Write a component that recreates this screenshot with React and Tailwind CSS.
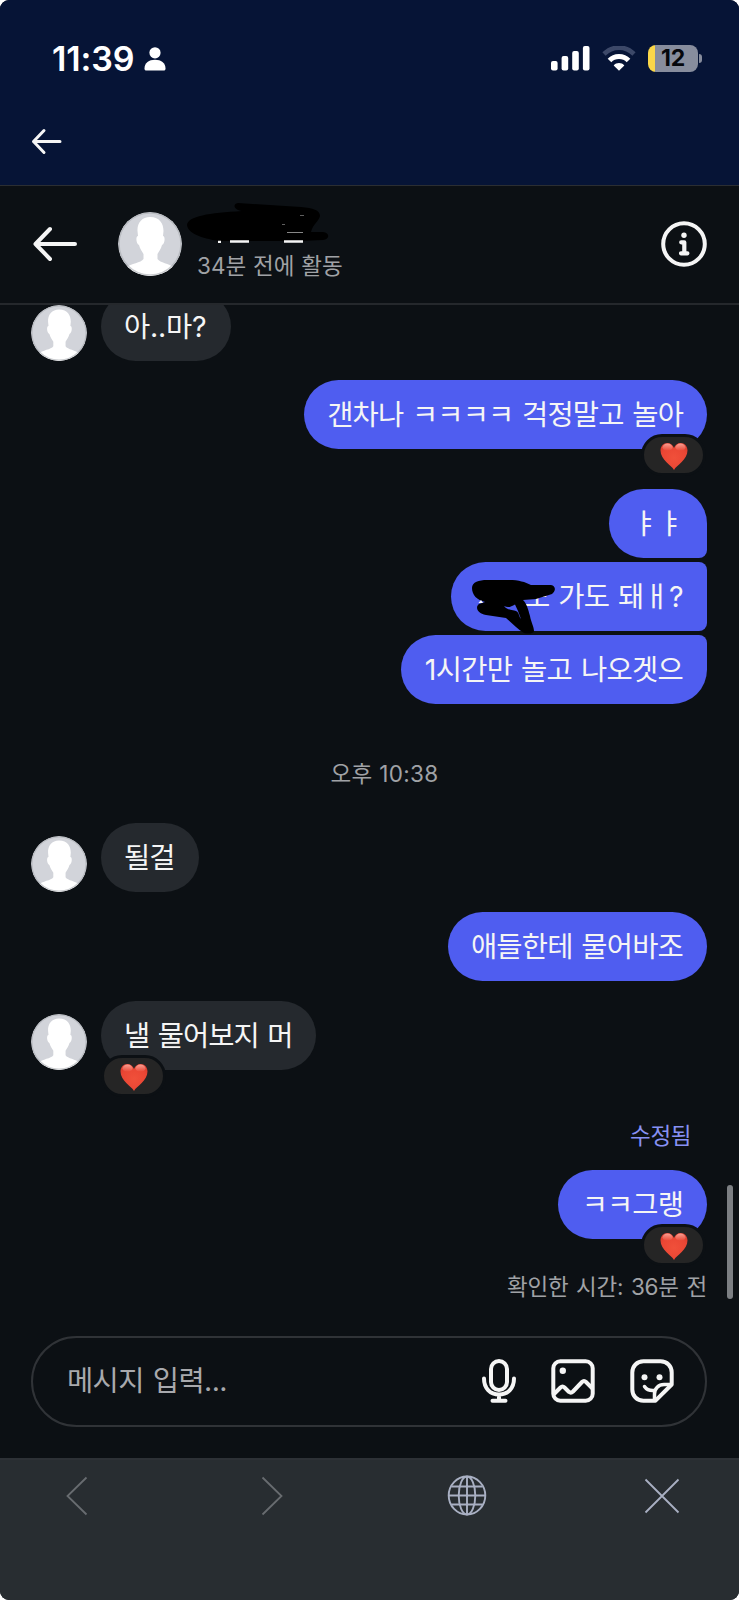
const MESSAGES = [
  { id: 1, from: 'them', text: '아..마?', row: '-mt-[13px]', bubble: 'w-[130px]', tracking: 'tracking-[-0.2px]' },
  { id: 2, from: 'me', text: '갠차나 ㅋㅋㅋㅋ 걱정말고 놀아', row: 'mt-[19px]', bubble: 'w-[403px]', tracking: 'tracking-[-0.85px]', liked: true },
  { id: 3, from: 'me', text: 'ㅑㅑ', row: 'mt-10', bubble: 'w-[98px] rounded-br-lg', tracking: 'tracking-[-0.9px]' },
  { id: 4, from: 'me', text: '도 가도 돼ㅐ?', row: 'mt-1', bubble: 'w-[256px] rounded-r-lg', tracking: 'tracking-[-0.7px]', censored: true },
  { id: 5, from: 'me', text: '1시간만 놀고 나오겟으', row: 'mt-1', bubble: 'w-[306px] rounded-tr-lg', tracking: 'tracking-[-0.7px]' },
  { id: 6, time: '오후 10:38' },
  { id: 7, from: 'them', text: '될걸', row: '', bubble: 'w-[98px]', tracking: 'tracking-[-0.9px]' },
  { id: 8, from: 'me', text: '애들한테 물어바조', row: 'mt-5', bubble: 'w-[259px]', tracking: 'tracking-[-0.8px]' },
  { id: 9, from: 'them', text: '낼 물어보지 머', row: 'mt-5', bubble: 'w-[215px]', tracking: 'tracking-[-1px]', liked: true },
  { id: 10, from: 'me', text: 'ㅋㅋ그랭', row: 'mt-[100px]', bubble: 'w-[149px]', tracking: 'tracking-[-0.9px]', liked: true, edited: true },
];

function Avatar({ className }) {
  return (
    <svg viewBox="0 0 64 64" className={`shrink-0 rounded-full ${className}`}>
      <circle cx="32" cy="32" r="32" fill="#d2d4da" />
      <path
        d="M32 5C24 5 19 11 19.500 19L20 24C17.500 24 18 32 21 33C22 37 24 39 25.500 42V47C23 51 13 51 8 56V64H56V56C51 51 42 51 39.500 47V42C41 39 43 37 44 33C47 32 47.500 24 45 24L45.500 19C45.500 12 42 5 32 5Z"
        fill="#fff"
      />
      <circle cx="32" cy="32" r="31" fill="none" stroke="#a9abb0" strokeOpacity="0.6" strokeWidth="1.5" />
    </svg>
  );
}

function Heart() {
  return (
    <svg className="mt-[2px]" width="28" height="28" viewBox="0 0 28 28">
      <defs>
        <radialGradient id="heart" cx="0.5" cy="0.55" r="0.65">
          <stop offset="0" stopColor="#f0503a" />
          <stop offset="0.7" stopColor="#ea4634" />
          <stop offset="1" stopColor="#d93a2c" />
        </radialGradient>
        <linearGradient id="shine" x1="0" y1="0" x2="0" y2="1">
          <stop offset="0" stopColor="#ffb0a4" stopOpacity="0.85" />
          <stop offset="1" stopColor="#ffb0a4" stopOpacity="0" />
        </linearGradient>
      </defs>
      <path d="M14 28C11.500 23 0.500 18 0.500 8.500C0.500 4 3.500 1 7.300 1C10.500 1 13 3 14 6C15 3 17.500 1 20.700 1C24.500 1 27.500 4 27.500 8.500C27.500 18 16.500 23 14 28Z" fill="url(#heart)" />
      <ellipse cx="7.500" cy="5.200" rx="5" ry="3.600" fill="url(#shine)" />
      <ellipse cx="20.500" cy="5.200" rx="5" ry="3.600" fill="url(#shine)" />
    </svg>
  );
}

function Scribble() {
  return (
    <svg className="absolute left-[20px] top-[17px]" width="84" height="56" viewBox="470 579 84 56">
      <path
        fillRule="evenodd"
        d="M471 588C471 582 478 580 486 580H508C518 580 524 582 530 585H550C555 586 555 591 551 594C546 596 540 597 535 599L522 600C526 604 527 609 529 616C530 622 533 627 533 631C532 634 527 634 523 633C516 629 510 622 505 618L485 615C476 613 474 607 478 604L484 602C476 600 471 595 471 588ZM503 606C507 608 510 607 514 604.500L517 611L520 619C518 617 518 613 516 611.500C513 610 507 611 503 606Z"
        fill="#000"
      />
      <path d="M477.500 603L480 600L482 603Z" fill="#fff" />
    </svg>
  );
}

function Message({ msg }) {
  const mine = msg.from === 'me';
  return (
    <div className={`flex items-end ${mine ? 'justify-end' : 'gap-[14px]'} ${msg.row}`}>
      {!mine && <Avatar className="size-14" />}
      <div
        className={`relative flex h-[69px] items-center whitespace-nowrap rounded-[34.5px] text-[28.5px] text-[#f5f5f5] ${
          mine ? 'justify-end bg-[#4f5df0] pr-6' : 'bg-[#25292e] pl-[23px]'
        } ${msg.bubble}`}
      >
        {msg.edited && (
          <span className="absolute -top-[48px] right-4 text-[22.5px] leading-7 tracking-[-0.4px] text-[#8791f3]">수정됨</span>
        )}
        <span className={`pt-[2px] leading-none [word-spacing:1.5px] ${msg.tracking}`}>{msg.text}</span>
        {msg.censored && <Scribble />}
        {msg.liked && (
          <div
            className={`absolute -bottom-[27px] flex h-[42px] w-[65px] items-center justify-center rounded-full border-3 border-[#0c1014] bg-[#252525] ${
              mine ? 'right-px' : 'left-0'
            }`}
          >
            <Heart />
          </div>
        )}
      </div>
    </div>
  );
}

function StatusBar() {
  return (
    <div className="flex h-[117px] items-center justify-between pl-[52px] pr-[37px] text-white">
      <div className="flex items-center gap-2">
        <span className="w-[84px] whitespace-nowrap text-[34px] font-semibold leading-none tracking-[-0.1px]">11:39</span>
        <svg width="22" height="24" viewBox="0 0 22 24" fill="#fff">
          <circle cx="11" cy="5.800" r="5.600" />
          <path d="M0.500 21.500C0.500 16 5 12.800 11 12.800S21.500 16 21.500 21.500C21.500 23 21 23.600 19.500 23.600H2.500C1 23.600 0.500 23 0.500 21.500Z" />
        </svg>
      </div>
      <div className="flex items-center gap-[12px]">
        <svg width="39" height="25" viewBox="0 0 39 25" fill="#fff">
          <rect x="0" y="15" width="6.600" height="9.600" rx="2" />
          <rect x="10.600" y="10" width="6.600" height="14.600" rx="2" />
          <rect x="21.200" y="5" width="6.600" height="19.600" rx="2" />
          <rect x="31.900" y="0" width="6.600" height="24.600" rx="2" />
        </svg>
        <svg width="34" height="25" viewBox="0 0 33 25" fill="none">
          <path d="M1.500 8C10 -0.500 23 -0.500 31.500 8" stroke="#3c4868" strokeWidth="4.600" />
          <path d="M7 14.500C12 9.300 21 9.300 26 14.500" stroke="#fff" strokeWidth="5" />
          <path d="M11.200 19.500C14 16.300 19 16.300 21.800 19.500L16.500 24.800Z" fill="#fff" />
        </svg>
        <div className="flex items-center gap-[1px]">
          <div className="flex h-[27px] w-[50px] items-center justify-center rounded-[8px] bg-linear-to-r from-[#fad749] from-[7px] to-[#878d9d] to-[7px] text-[23px] font-bold leading-none tracking-[-0.3px] text-[#05070c]">
            12
          </div>
          <div className="h-[9px] w-[3px] rounded-r-full bg-[#878d9d]" />
        </div>
      </div>
    </div>
  );
}

function ChatHeader() {
  return (
    <header className="flex h-[120px] items-center border-b-2 border-t border-b-[#25282c] border-t-[#2b2e32] pb-[2px] pl-8 pr-8">
      <svg width="46" height="36" viewBox="0 0 46 36" fill="none" stroke="#f5f5f5" strokeWidth="4" strokeLinecap="round" strokeLinejoin="round">
        <path d="M18 3L3.500 18L18 33M3.500 18H43" />
      </svg>
      <Avatar className="ml-10 size-16" />
      <div className="relative ml-[15px] flex-1 pt-[44px]">
        <p className="text-[22.5px] leading-[28px] [word-spacing:0.5px] text-[#a0a2a6]">34분 전에 활동</p>
        <svg className="absolute -left-[10px] -top-[7px]" width="144" height="44" viewBox="186 199 144 44">
          <path
            d="M237 201L300 205C312 206 319 208 319 214C318 219 312 222 310 230H322C329 231 329 237 322 238L300 239H218C206 237 187 233 186 223C187 214 208 211 241 209C233 208 231 202 237 201Z"
            fill="#000"
          />
          <path d="M217 239.800H220M229 239.500H248M283 239.500H302" stroke="#f5f5f5" strokeWidth="2.300" />
          <path d="M286 230.500H302" stroke="#aaa" strokeWidth="0.800" />
          <path d="M281 222.500H284M299 213.500H303" stroke="#777" strokeWidth="0.800" />
        </svg>
      </div>
      <svg width="46" height="46" viewBox="0 0 46 46" fill="none" stroke="#f5f5f5" strokeWidth="4" strokeLinecap="round" strokeLinejoin="round">
        <circle cx="23" cy="23" r="20.800" />
        <circle cx="23" cy="14.200" r="2.700" fill="#f5f5f5" stroke="none" />
        <path d="M20.200 21.300H23.300V32.300M20 32.300H26.400" strokeWidth="4.200" />
      </svg>
    </header>
  );
}

function Composer() {
  return (
    <div className="ml-[31px] mr-8 flex h-[91px] items-center rounded-full border-2 border-[#303337] pl-[34px] pr-[31px]">
      <span className="flex-1 text-[28.5px] leading-none tracking-[-0.6px] [word-spacing:1.5px] text-[#a8a9ad]">메시지 입력...</span>
      <div className="flex items-center gap-[35px] pb-px">
        <svg width="34" height="44" viewBox="0 0 34 44" fill="none" stroke="#f5f5f5" strokeWidth="4" strokeLinecap="round">
          <rect x="9" y="2" width="16" height="29" rx="8" />
          <path d="M2 19.500C2 29 8 35.500 17 35.500S32 29 32 19.500M17 35.500V41.500M10.500 41.800H23.500" />
        </svg>
        <svg width="44" height="44" viewBox="0 0 44 44" fill="none" stroke="#f5f5f5" strokeWidth="4" strokeLinejoin="round">
          <rect x="2.300" y="2.300" width="39.400" height="39.400" rx="7" />
          <circle cx="11.800" cy="11.800" r="3.200" fill="#f5f5f5" stroke="none" />
          <path d="M3 35L9.500 28.500Q11.500 26.500 13.500 28.500L18 33Q20 34.500 22 32.500L31 23Q33 21 35 23L41.500 29.500" />
        </svg>
        <svg width="44" height="44" viewBox="0 0 44 44" fill="none" stroke="#f5f5f5" strokeWidth="4" strokeLinecap="round" strokeLinejoin="round">
          <path d="M25.500 41.700H13.500C7 41.700 2.300 37 2.300 30.500V13.500C2.300 7 7 2.300 13.500 2.300H30.500C37 2.300 41.700 7 41.700 13.500V25.500L25.500 41.700Z" />
          <path d="M41 25.500H34C28.500 25.500 24.500 29.500 24.500 35V41" strokeWidth="3.500" />
          <circle cx="14.500" cy="18.300" r="3" fill="#f5f5f5" stroke="none" />
          <circle cx="29.500" cy="18.300" r="3" fill="#f5f5f5" stroke="none" />
          <path d="M14.500 27.500C16.500 30.500 19.500 32 24.500 31.500" strokeWidth="3.500" />
        </svg>
      </div>
    </div>
  );
}

function BrowserBar() {
  return (
    <footer className="h-[142px] border-t-2 border-[#2d3136] bg-[#282d31] pl-[66px] pr-[59px] pt-[15px]">
      <div className="flex h-[41px] items-center">
        <svg width="22" height="40" viewBox="0 0 22 40" fill="none" stroke="#686c70" strokeWidth="1.800">
          <path d="M20.500 1.500L1.500 20L20.500 38.500" />
        </svg>
        <svg className="ml-[173px]" width="22" height="40" viewBox="0 0 22 40" fill="none" stroke="#686c70" strokeWidth="1.800">
          <path d="M1.500 1.500L20.500 20L1.500 38.500" />
        </svg>
        <svg className="ml-[164px]" width="40" height="41" viewBox="0 0 40 41" fill="none" stroke="#a9b0c3" strokeWidth="1.900">
          <ellipse cx="20" cy="20.500" rx="18.300" ry="19" />
          <ellipse cx="20" cy="20.500" rx="8.300" ry="19" />
          <path d="M20 1.500V39.500M1.700 20.500H38.300M4.500 11.500H35.500M4.500 29.500H35.500" />
        </svg>
        <svg className="ml-auto" width="36" height="36" viewBox="0 0 36 36" fill="none" stroke="#a9b0c3" strokeWidth="1.800">
          <path d="M1.500 1.500L34.500 34.500M34.500 1.500L1.500 34.500" />
        </svg>
      </div>
    </footer>
  );
}

export default function App() {
  return (
    <div className="bg-white">
      <div className="flex h-[1600px] w-[739px] flex-col overflow-hidden rounded-[9px] bg-[#0c1014] font-['Inter','Noto_Sans_CJK_KR',sans-serif]">
        <div className="h-[185px] shrink-0 bg-[#061436]">
          <StatusBar />
          <svg className="ml-[31px] mt-[11px]" width="31" height="27" viewBox="0 0 31 27" fill="none" stroke="#f5f5f5" strokeWidth="3" strokeLinecap="round" strokeLinejoin="round">
            <path d="M13 2.500L2.500 13.500L13 24.500M2.500 13.500H29" />
          </svg>
        </div>
        <ChatHeader />
        <main className="relative h-[1031px] shrink-0 overflow-hidden pl-[31px] pr-8">
          {MESSAGES.map((msg) =>
            msg.time ? (
              <p key={msg.id} className="flex h-[119px] items-center justify-center pl-[31px] pt-[22px] text-[22.5px] leading-none tracking-[0.3px] text-[#a0a2a6]">
                {msg.time}
              </p>
            ) : (
              <Message key={msg.id} msg={msg} />
            )
          )}
          <p className="mt-[34px] text-right text-[22.5px] leading-[28px] tracking-[-0.2px] [word-spacing:1.5px] text-[#a0a2a6]">확인한 시간: 36분 전</p>
          <div className="absolute right-[6px] top-[880px] h-[114px] w-[6px] rounded-full bg-[#7c7f83]" />
        </main>
        <Composer />
        <div className="flex-1" />
        <BrowserBar />
      </div>
    </div>
  );
}
